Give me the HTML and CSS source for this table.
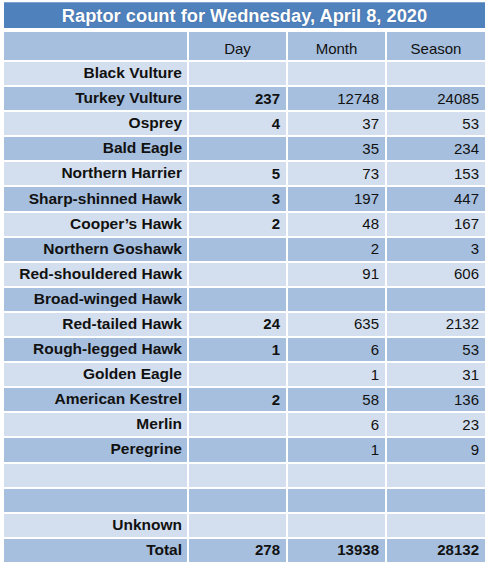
FILE: index.html
```html
<!DOCTYPE html>
<html>
<head>
<meta charset="utf-8">
<link rel="stylesheet" href="styles.css">
</head>
<body>
<div class="wrap">
  <div class="title">Raptor count for Wednesday, April 8, 2020</div>
  <div class="grid">
    <div class="c hd"></div><div class="c hd ctr">Day</div><div class="c hd ctr">Month</div><div class="c hd ctr">Season</div>

    <div class="c lt name">Black Vulture</div><div class="c lt b"></div><div class="c lt"></div><div class="c lt"></div>
    <div class="c dk name">Turkey Vulture</div><div class="c dk b">237</div><div class="c dk">12748</div><div class="c dk">24085</div>
    <div class="c lt name">Osprey</div><div class="c lt b">4</div><div class="c lt">37</div><div class="c lt">53</div>
    <div class="c dk name">Bald Eagle</div><div class="c dk b"></div><div class="c dk">35</div><div class="c dk">234</div>
    <div class="c lt name">Northern Harrier</div><div class="c lt b">5</div><div class="c lt">73</div><div class="c lt">153</div>
    <div class="c dk name">Sharp-shinned Hawk</div><div class="c dk b">3</div><div class="c dk">197</div><div class="c dk">447</div>
    <div class="c lt name">Cooper’s Hawk</div><div class="c lt b">2</div><div class="c lt">48</div><div class="c lt">167</div>
    <div class="c dk name">Northern Goshawk</div><div class="c dk b"></div><div class="c dk">2</div><div class="c dk">3</div>
    <div class="c lt name">Red-shouldered Hawk</div><div class="c lt b"></div><div class="c lt">91</div><div class="c lt">606</div>
    <div class="c dk name">Broad-winged Hawk</div><div class="c dk b"></div><div class="c dk"></div><div class="c dk"></div>
    <div class="c lt name">Red-tailed Hawk</div><div class="c lt b">24</div><div class="c lt">635</div><div class="c lt">2132</div>
    <div class="c dk name">Rough-legged Hawk</div><div class="c dk b">1</div><div class="c dk">6</div><div class="c dk">53</div>
    <div class="c lt name">Golden Eagle</div><div class="c lt b"></div><div class="c lt">1</div><div class="c lt">31</div>
    <div class="c dk name">American Kestrel</div><div class="c dk b">2</div><div class="c dk">58</div><div class="c dk">136</div>
    <div class="c lt name">Merlin</div><div class="c lt b"></div><div class="c lt">6</div><div class="c lt">23</div>
    <div class="c dk name">Peregrine</div><div class="c dk b"></div><div class="c dk">1</div><div class="c dk">9</div>
    <div class="c lt name"></div><div class="c lt b"></div><div class="c lt"></div><div class="c lt"></div>
    <div class="c dk name"></div><div class="c dk b"></div><div class="c dk"></div><div class="c dk"></div>
    <div class="c lt name">Unknown</div><div class="c lt b"></div><div class="c lt"></div><div class="c lt"></div>
    <div class="c dk name">Total</div><div class="c dk b">278</div><div class="c dk b">13938</div><div class="c dk b">28132</div>
  </div>
</div>
</body>
</html>
```

FILE: styles.css
```css
html, body {
  margin: 0;
  padding: 0;
  background: #ffffff;
}
body {
  font-family: "Liberation Sans", Arial, sans-serif;
  color: #111111;
}
.wrap {
  padding: 2px 4px 0 4px;
  width: 481px;
}
.title {
  background: #4f81bd;
  border-top: 1px solid #7fa3d0;
  height: 25px;
  line-height: 25px;
  color: #ffffff;
  font-weight: bold;
  font-size: 18.3px;
  text-align: center;
  text-shadow: 0 0 1px rgba(40, 60, 100, 0.5);
}
.grid {
  margin-top: 4px;
  display: grid;
  grid-template-columns: 183px 97px 97px 98px;
  grid-template-rows: 28px repeat(20, 23.1px);
  gap: 2px;
}
.c {
  font-size: 15px;
  display: flex;
  align-items: center;
  justify-content: flex-end;
  padding: 0 6px 1px 0;
  white-space: nowrap;
}
.hd {
  background: #a7bfde;
  padding-top: 4px;
  padding-bottom: 0;
}
.ctr {
  justify-content: center;
  padding-right: 0;
}
.lt { background: #d3dfee; }
.dk { background: #a7bfde; }
.name {
  font-weight: bold;
  font-size: 15.5px;
  padding-right: 5px;
}
.b { font-weight: bold; }
```
